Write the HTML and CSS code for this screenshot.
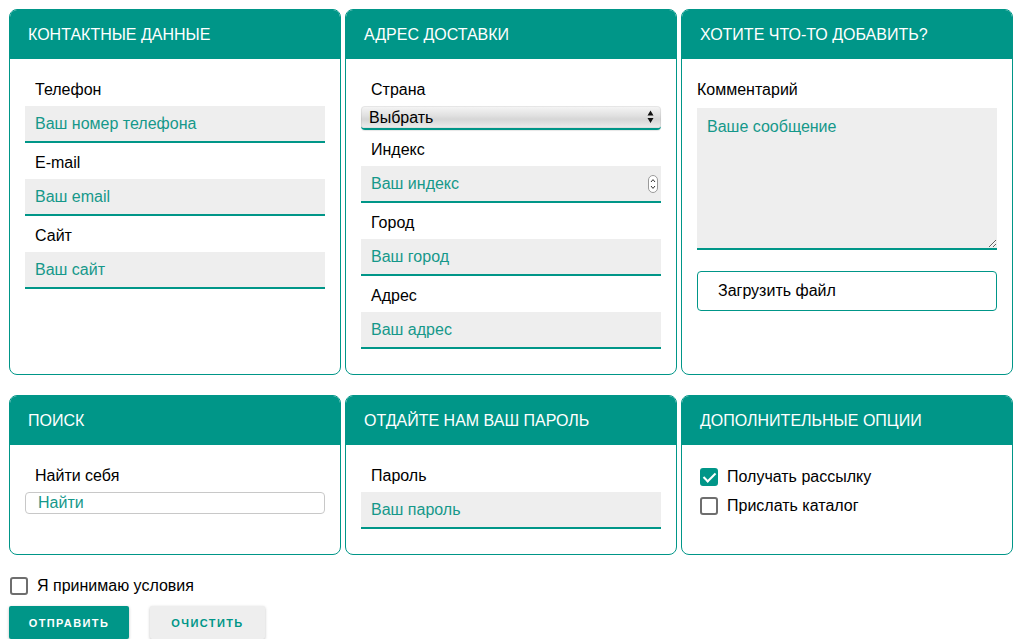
FILE: index.html
```html
<!DOCTYPE html>
<html lang="ru">
<head>
<meta charset="utf-8">
<title>Форма</title>
<link rel="stylesheet" href="styles.css">
</head>
<body>
<form class="page">
  <div class="cards">
    <section class="card">
      <h2 class="card-title">КОНТАКТНЫЕ ДАННЫЕ</h2>
      <div class="card-body">
        <label class="label" for="phone">Телефон</label>
        <div class="field"><input id="phone" class="input" type="text" placeholder="Ваш номер телефона"></div>
        <label class="label" for="email">E-mail</label>
        <div class="field"><input id="email" class="input" type="text" placeholder="Ваш email"></div>
        <label class="label" for="site">Сайт</label>
        <div class="field"><input id="site" class="input" type="text" placeholder="Ваш сайт"></div>
      </div>
    </section>

    <section class="card">
      <h2 class="card-title">АДРЕС ДОСТАВКИ</h2>
      <div class="card-body">
        <label class="label" for="country">Страна</label>
        <div class="select-wrap">
          <select id="country" class="select"><option>Выбрать</option></select>
          <svg class="select-arrow" width="7" height="14" viewBox="0 0 7 14"><path d="M3.5 0.5 L6.5 5.5 L0.5 5.5 Z M3.5 13 L6.5 8 L0.5 8 Z" fill="#111"/></svg>
        </div>
        <label class="label" for="zip">Индекс</label>
        <div class="field field--spin">
          <input id="zip" class="input" type="text" placeholder="Ваш индекс">
          <svg class="spin" width="10" height="18" viewBox="0 0 10 18"><rect x="0.5" y="0.5" width="9" height="17" rx="4.5" fill="#fff" stroke="#9a9a9a"/><path d="M3 7 L5 4.6 L7 7 M3 11 L5 13.4 L7 11" fill="none" stroke="#333" stroke-width="1"/></svg>
        </div>
        <label class="label" for="city">Город</label>
        <div class="field"><input id="city" class="input" type="text" placeholder="Ваш город"></div>
        <label class="label" for="addr">Адрес</label>
        <div class="field"><input id="addr" class="input" type="text" placeholder="Ваш адрес"></div>
      </div>
    </section>

    <section class="card">
      <h2 class="card-title">ХОТИТЕ ЧТО-ТО ДОБАВИТЬ?</h2>
      <div class="card-body">
        <label class="label label--flush" for="msg">Комментарий</label>
        <textarea id="msg" class="textarea" placeholder="Ваше сообщение"></textarea>
        <label class="file-btn">Загрузить файл<input class="file-input" type="file"></label>
      </div>
    </section>

    <section class="card">
      <h2 class="card-title">ПОИСК</h2>
      <div class="card-body">
        <label class="label" for="q">Найти себя</label>
        <input id="q" class="search" type="text" placeholder="Найти">
      </div>
    </section>

    <section class="card">
      <h2 class="card-title">ОТДАЙТЕ НАМ ВАШ ПАРОЛЬ</h2>
      <div class="card-body">
        <label class="label" for="pass">Пароль</label>
        <div class="field"><input id="pass" class="input" type="password" placeholder="Ваш пароль"></div>
      </div>
    </section>

    <section class="card">
      <h2 class="card-title">ДОПОЛНИТЕЛЬНЫЕ ОПЦИИ</h2>
      <div class="card-body">
        <div class="options">
          <label class="option"><input class="check" type="checkbox" checked>Получать рассылку</label>
          <label class="option"><input class="check" type="checkbox">Прислать каталог</label>
        </div>
      </div>
    </section>
  </div>

  <label class="terms"><input class="check" type="checkbox">Я принимаю условия</label>

  <div class="actions">
    <button class="btn btn-primary" type="button">Отправить</button>
    <button class="btn btn-secondary" type="button">Очистить</button>
  </div>
</form>
</body>
</html>
```

FILE: styles.css
```css
* { box-sizing: border-box; }

html, body {
  margin: 0;
  background: #fff;
}

body {
  font-family: "Liberation Sans", Arial, Helvetica, sans-serif;
  font-size: 16px;
  color: #000;
}

.page {
  padding: 9px 6px 0 9px;
}

.cards {
  display: grid;
  grid-template-columns: repeat(3, 332px);
  column-gap: 4px;
  row-gap: 20px;
}

.card {
  border: 1px solid #009688;
  border-radius: 8px;
  overflow: hidden;
  display: flex;
  flex-direction: column;
  background: #fff;
}

.card-title {
  margin: 0;
  height: 49px;
  background: #009688;
  color: #fff;
  font-size: 16px;
  font-weight: normal;
  padding-left: 18px;
  display: flex;
  align-items: center;
}

.card-body {
  padding: 11px 15px 25px;
}

.label {
  display: block;
  padding: 11px 10px 7px;
  line-height: 18px;
}

.label--flush {
  padding-left: 0;
}

.field {
  display: flex;
  align-items: center;
  height: 37px;
  background: #eee;
  border-bottom: 2px solid #009688;
}

.input {
  flex: 1;
  min-width: 0;
  height: 100%;
  border: 0;
  background: transparent;
  font: inherit;
  color: #000;
  padding: 0 10px;
  outline: none;
}

.input::placeholder,
.textarea::placeholder,
.search::placeholder {
  color: #15988a;
  opacity: 1;
}

.spin {
  margin-right: 3px;
  flex: none;
}

.select-wrap {
  display: flex;
  align-items: center;
  height: 24px;
  border-radius: 4px;
  background: linear-gradient(#f6f6f6, #e0e0e0 45%, #d6d6d6 60%, #ededed);
  border-bottom: 2px solid #009688;
  box-shadow: inset 0 0 0 1px rgba(0, 0, 0, 0.06), 0 1px 1px rgba(0, 0, 0, 0.1);
}

.select {
  flex: 1;
  min-width: 0;
  appearance: none;
  -webkit-appearance: none;
  border: 0;
  background: transparent;
  font: inherit;
  color: #000;
  padding: 0 0 0 8px;
  height: 100%;
  outline: none;
}

.select-arrow {
  margin-right: 7px;
  flex: none;
}

.textarea {
  display: block;
  width: 100%;
  height: 142px;
  margin: 2px 0 0;
  border: 0;
  border-bottom: 2px solid #009688;
  background: #eee;
  padding: 10px;
  font: inherit;
  line-height: 18px;
  color: #000;
  outline: none;
}

.file-btn {
  display: flex;
  align-items: center;
  height: 40px;
  margin-top: 21px;
  border: 1px solid #009688;
  border-radius: 4px;
  padding-left: 20px;
}

.file-input {
  display: none;
}

.search {
  display: block;
  width: 100%;
  height: 22px;
  border: 1px solid #c8c8c8;
  border-radius: 4px;
  padding: 0 12px;
  font-family: inherit;
  font-size: 16px;
  color: #000;
  background: #fff;
  outline: none;
}

.options {
  padding-top: 6px;
}

.option {
  display: flex;
  align-items: center;
  gap: 9px;
  height: 29px;
  padding-left: 3px;
}

.check {
  appearance: none;
  -webkit-appearance: none;
  margin: 0;
  width: 18px;
  height: 18px;
  border: 2px solid #6e6e6e;
  border-radius: 3px;
  background: #fff;
  display: inline-grid;
  place-content: center;
  flex: none;
}

.check:checked {
  background: #009688;
  border-color: #009688;
}

.check:checked::after {
  content: "";
  width: 5px;
  height: 10px;
  border-right: 2px solid #fff;
  border-bottom: 2px solid #fff;
  transform: translateY(-1px) rotate(45deg);
}

.terms {
  display: flex;
  align-items: center;
  gap: 9px;
  height: 18px;
  margin-top: 22px;
  padding-left: 1px;
}

.actions {
  display: flex;
  gap: 21px;
  margin-top: 11px;
}

.btn {
  height: 33px;
  border: 0;
  border-radius: 2px;
  font-family: "Liberation Sans", Arial, sans-serif;
  font-weight: bold;
  font-size: 11px;
  letter-spacing: 1.4px;
  text-transform: uppercase;
  padding: 0;
  box-shadow: 0 1px 3px rgba(0, 0, 0, 0.25);
}

.btn-primary {
  width: 120px;
  background: #009688;
  color: #fff;
}

.btn-secondary {
  width: 115px;
  background: #eee;
  color: #009688;
}
```
